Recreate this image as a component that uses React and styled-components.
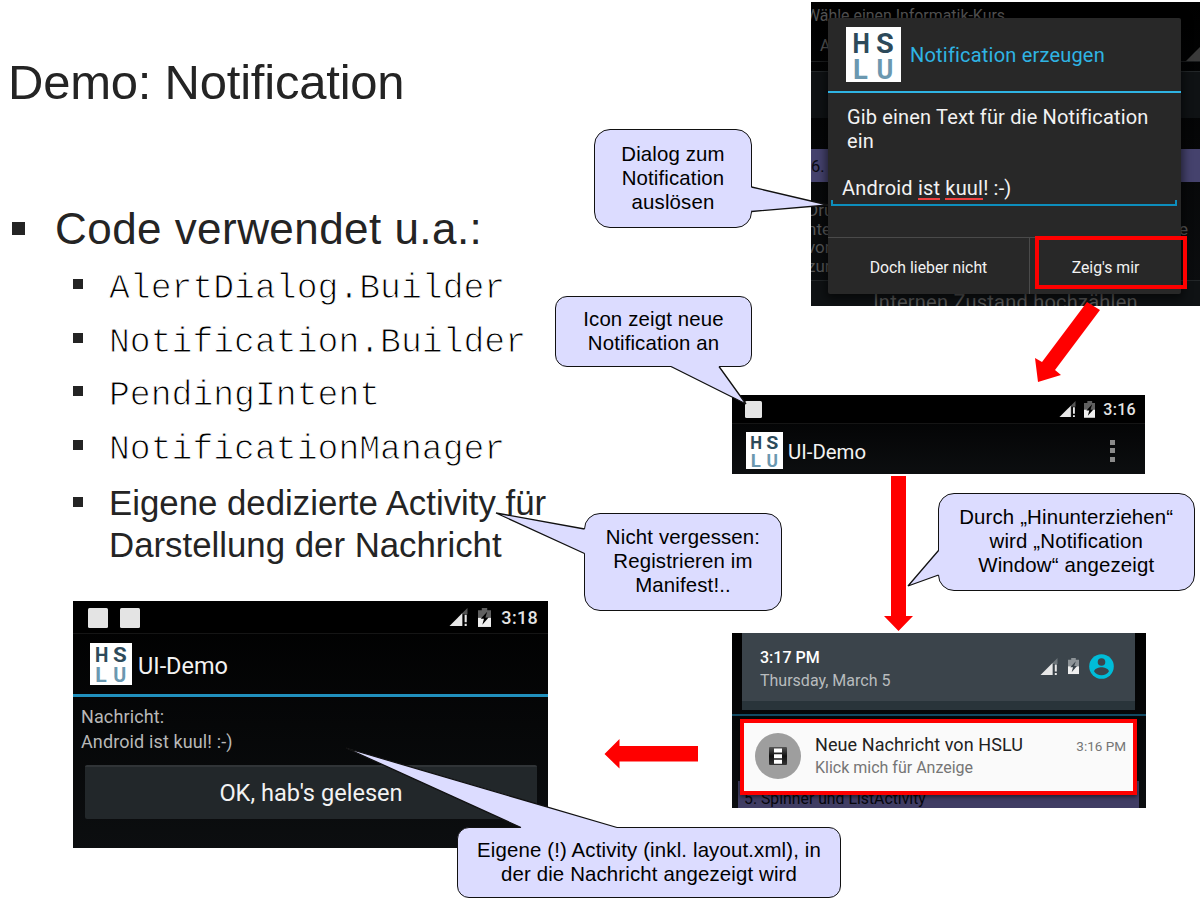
import React from "react";
import styled, { createGlobalStyle } from "styled-components";

const GlobalStyle = createGlobalStyle`
  * { box-sizing: border-box; }
  body { margin: 0; background: #fff; }
`;

const Slide = styled.main`
  position: relative;
  width: 1204px;
  height: 901px;
  overflow: hidden;
  background: #fff;
  color: #242424;
  font-family: "Liberation Sans", Arial, sans-serif;
`;

/* ---------- slide text ---------- */

const Outline = styled.section`
  display: flex;
  flex-direction: column;
  width: 570px;
  padding: 54px 0 0 8px;
`;

const Title = styled.h1`
  margin: 0 0 91px;
  font-size: 49px;
  font-weight: 400;
  letter-spacing: -0.22px;
  line-height: 56px;
  white-space: nowrap;
`;

const Topic = styled.h2`
  display: flex;
  align-items: center;
  gap: 30px;
  margin: 0 0 11px;
  padding-left: 4px;
  font-size: 44px;
  font-weight: 400;
  letter-spacing: 0.45px;
  line-height: 56px;
  white-space: nowrap;
  &::before {
    content: "";
    width: 13px;
    height: 13px;
    margin-top: -2px;
    background: #242424;
  }
`;

const Points = styled.ul`
  margin: 0;
  padding: 0 0 0 65px;
  list-style: none;
`;

const Point = styled.li`
  display: flex;
  gap: 26px;
  height: 53.6px;
  color: ${(p) => (p.$code ? "#000" : "inherit")};
  font-family: ${(p) => (p.$code ? '"Liberation Mono", monospace' : "inherit")};
  font-size: ${(p) => (p.$code ? "34.75px" : "34.8px")};
  -webkit-text-stroke: ${(p) => (p.$code ? "1px #fff" : "0")};
  line-height: 42px;
  white-space: nowrap;
  &::before {
    content: "";
    flex: none;
    width: 10px;
    height: 10px;
    margin-top: ${(p) => (p.$code ? 11 : 15)}px;
    background: #242424;
  }
`;

/* ---------- callouts and arrows ---------- */

const Bubble = styled.div`
  position: absolute;
  left: ${(p) => p.$x}px;
  top: ${(p) => p.$y}px;
  width: ${(p) => p.$w}px;
  height: ${(p) => p.$h}px;
  display: flex;
  align-items: center;
  justify-content: center;
  padding-bottom: 1px;
  border: 1.4px solid #111;
  border-radius: ${(p) => p.$r}px;
  background: #dcdcff;
  color: #000;
  font-size: 20.4px;
  letter-spacing: 0.15px;
  line-height: 24px;
  text-align: center;
  white-space: pre;
`;

const Overlay = styled.svg`
  position: absolute;
  inset: 0;
  pointer-events: none;
`;

function Callout({ x, y, w, h, r, tail, cover, children }) {
  return (
    <>
      <Bubble $x={x} $y={y} $w={w} $h={h} $r={r}>{children}</Bubble>
      <Overlay width="1204" height="901">
        <polygon points={cover} fill="#dcdcff" />
        <polyline points={tail} fill="#dcdcff" stroke="#111" strokeWidth="1.3" strokeLinejoin="bevel" />
      </Overlay>
    </>
  );
}

/* ---------- phone screens ---------- */

const Screen = styled.section`
  position: absolute;
  left: ${(p) => p.$x}px;
  top: ${(p) => p.$y}px;
  width: ${(p) => p.$w}px;
  height: ${(p) => p.$h}px;
  overflow: hidden;
  background: linear-gradient(#000, #0c0e10);
  color: #f2f2f2;
  font-family: Roboto, sans-serif;
  white-space: nowrap;
`;

const StatusBar = styled.div`
  display: flex;
  align-items: center;
  height: ${(p) => p.$h}px;
  padding: 1px ${(p) => p.$right}px 0 ${(p) => p.$left}px;
  border-bottom: 1px solid #151515;
  background: #000;
`;

const NoticeSquare = styled.span`
  width: ${(p) => p.$s}px;
  height: ${(p) => p.$s}px;
  margin-right: 12px;
  border-radius: 1.5px;
  background: #e4e4e4;
`;

const StatusIcons = styled.div`
  display: flex;
  align-items: center;
  gap: ${(p) => p.$gap}px;
  margin-left: auto;
`;

const Clock = styled.span`
  font-size: ${(p) => p.$size}px;
  font-weight: 500;
  letter-spacing: 0.3px;
  color: #e4e4e4;
`;

const AppBar = styled.div`
  display: flex;
  align-items: center;
  gap: ${(p) => p.$gap}px;
  height: ${(p) => p.$h}px;
  padding: 0 ${(p) => p.$right || 0}px 0 ${(p) => p.$left}px;
  border-bottom: ${(p) => (p.$rule ? "3px solid #2090bd" : "0")};
  font-size: ${(p) => p.$size}px;
`;

const AppName = styled.span`
  padding-top: 3px;
`;

const MenuDots = styled.span`
  display: flex;
  flex-direction: column;
  gap: 3.5px;
  margin-left: auto;
  i { width: 5px; height: 5px; background: #8a8a8a; }
`;

const LogoSvg = styled.svg`
  flex: none;
  font-family: Roboto, sans-serif;
  font-size: 27.5px;
  font-weight: 700;
`;

function HsluLogo({ size }) {
  return (
    <LogoSvg width={size} height={size} viewBox="0 0 55 55">
      <rect width="55" height="55" fill="#fff" />
      <text x="6.5" y="25.5" fill="#2d4a5a" textLength="17.5" lengthAdjust="spacingAndGlyphs">H</text>
      <text x="30" y="25.5" fill="#2d4a5a" textLength="18" lengthAdjust="spacingAndGlyphs">S</text>
      <text x="7" y="51.5" fill="#6b98b0" textLength="15" lengthAdjust="spacingAndGlyphs">L</text>
      <text x="30.5" y="51.5" fill="#6b98b0" textLength="17" lengthAdjust="spacingAndGlyphs">U</text>
    </LogoSvg>
  );
}

function SignalIcon({ size, dim = "#555", back = "#000" }) {
  return (
    <svg width={size} height={size} viewBox="0 0 18 18">
      <path d="M17.500 0 12 5.500V17h5.500Z" fill={dim} />
      <path d="M0.500 17 12.500 5V17Z" fill="#e8e8e8" />
      <path d="M13 6h5v12h-5z" fill={back} />
      <path d="M14.800 6.500h2v7h-2zM14.800 15h2v2h-2z" fill="#e8e8e8" />
    </svg>
  );
}

function BatteryIcon({ width, bolt = "#000", dim = "#606060" }) {
  return (
    <svg width={width} height={width * 1.5} viewBox="0 0 12 18">
      <path d="M3.500 0h5v2H12v7H0V2h3.500z" fill={dim} />
      <path d="M0 9h12v8.500H0z" fill="#efefef" />
      <path d="M8.500 3.500 2.500 10h3L4 15.500 9.800 8.800H6.800z" fill={bolt} />
    </svg>
  );
}

/* dialog screen */

const Backdrop = styled.div`
  display: flex;
  flex-direction: column;
  height: 100%;
  color: #555;
  font-size: 15.9px;
`;

const BackLine = styled.div`
  height: ${(p) => p.$h}px;
  padding-left: ${(p) => p.$left || 0}px;
  line-height: ${(p) => p.$h}px;
  text-indent: ${(p) => p.$shift || 0}px;
`;

const BackSpinner = styled(BackLine)`
  display: flex;
  justify-content: space-between;
  border-bottom: 1px solid #1b1d1e;
  &::after {
    content: "";
    align-self: flex-end;
    border-left: 14px solid transparent;
    border-bottom: 14px solid #3a3a3a;
  }
`;

const BackButton = styled.div`
  flex: none;
  height: ${(p) => p.$h}px;
  margin: ${(p) => p.$m};
  border-top: 1px solid #222628;
  background: #0f1214;
  color: #5a5a5a;
  font-size: 20px;
  letter-spacing: 0.24px;
  line-height: 43px;
  text-align: center;
`;

const BackSection = styled.div`
  height: 33px;
  margin-bottom: 19px;
  background: #45426d;
  color: #0a0a12;
  font-size: 16.5px;
  line-height: 35px;
`;

const BackText = styled.div`
  display: flex;
  justify-content: space-between;
  padding-right: 12px;
  height: 18.6px;
  font-size: 17px;
  line-height: 19px;
  text-indent: -4px;
`;

const Dialog = styled.div`
  position: absolute;
  left: 17px;
  top: 16px;
  width: 353px;
  height: 276px;
  display: flex;
  flex-direction: column;
  border-radius: 2px;
  background: #282828;
  box-shadow: 0 3px 10px 2px rgba(0, 0, 0, 0.55);
`;

const DialogTitle = styled.div`
  display: flex;
  align-items: center;
  gap: 9px;
  height: 75px;
  padding: 0 0 1px 18px;
  border-bottom: 2.5px solid #2fb4e4;
  color: #2fb4e4;
  font-size: 20px;
  letter-spacing: 0.2px;
  span { padding-top: 2px; }
`;

const DialogMessage = styled.p`
  margin: 12px 0 0;
  padding-left: 19px;
  font-size: 20px;
  letter-spacing: 0.16px;
  line-height: 24px;
`;

const DialogInput = styled.div`
  height: 29px;
  margin: 24px 4px 0 3px;
  padding-left: 11px;
  font-size: 20px;
  letter-spacing: 0.18px;
  line-height: 23px;
  border-bottom: 2px solid #0d8ebd;
  background:
    linear-gradient(#0d8ebd, #0d8ebd) left bottom / 2px 4px no-repeat,
    linear-gradient(#0d8ebd, #0d8ebd) right bottom / 2px 4px no-repeat;
`;

const Misspelled = styled.span`
  background: linear-gradient(#f04040, #f04040) left bottom / 100% 2px no-repeat;
`;

const DialogActions = styled.div`
  display: flex;
  flex: 1;
  margin-top: 31px;
  border-top: 1px solid #4a4a4a;
`;

const DialogButton = styled.button`
  width: ${(p) => p.$w}px;
  padding: 3px 0 0;
  border: 0;
  border-right: ${(p) => (p.$divided ? "1px solid #4a4a4a" : "0")};
  background: none;
  color: #f2f2f2;
  font: 400 15.8px Roboto, sans-serif;
`;

const Highlight = styled.div`
  position: absolute;
  left: ${(p) => p.$x}px;
  top: ${(p) => p.$y}px;
  width: ${(p) => p.$w}px;
  height: ${(p) => p.$h}px;
  border: 4px solid #f00;
`;

/* notification shade screen */

const ShadeHeader = styled.div`
  display: flex;
  align-items: center;
  height: 77px;
  margin: 0 11px 0 10px;
  padding: 0 21px 1px 18px;
  border-bottom: 9px solid #29343a;
  background: #3b444b;
`;

const ShadeDate = styled.div`
  padding-top: 4px;
  color: #b8bcbe;
  font-size: 16px;
  line-height: 23px;
  b { display: block; color: #fff; font-weight: 500; }
`;

const ShadeRule = styled.div`
  height: 2px;
  margin-top: 4px;
  background: #124a63;
`;

const ShadeSection = styled.div`
  height: 27px;
  margin: 65px 7px 0 6px;
  padding-left: 6px;
  background: #403d64;
  color: #06060c;
  font-size: 15.8px;
  line-height: 36px;
`;

const Notice = styled.div`
  position: absolute;
  left: 8px;
  top: 86px;
  width: 397px;
  height: 76px;
  display: flex;
  padding: 10px 7px 0 11px;
  border: 4px solid #f00;
  background: #fafafa;
  box-shadow: 0 2px 4px rgba(0, 0, 0, 0.5);
`;

const NoticeAvatar = styled.div`
  display: flex;
  align-items: center;
  justify-content: center;
  width: 46px;
  height: 46px;
  margin-right: 14px;
  border-radius: 50%;
  background: #9e9e9e;
`;

const NoticeBody = styled.div`
  flex: 1;
  color: #757575;
  font-size: 16px;
  line-height: 23px;
  strong { display: block; color: #212121; font-size: 18px; font-weight: 400; letter-spacing: 0.08px; }
`;

const NoticeTime = styled.time`
  color: #757575;
  font-size: 13.5px;
  line-height: 27px;
`;

/* message screen */

const Message = styled.div`
  padding: 7px 0 0 8px;
  color: #b8b8b8;
  font-size: 18px;
  letter-spacing: 0.12px;
  line-height: 25px;
`;

const WideButton = styled.button`
  display: block;
  width: 452px;
  height: 54px;
  margin: 11px 0 0 12px;
  border: 0;
  border-top: 2px solid #303437;
  border-radius: 2px;
  background: #22272a;
  color: #f2f2f2;
  font: 400 23.6px Roboto, sans-serif;
`;

export default function App() {
  return (
    <Slide>
      <GlobalStyle />
      <Outline>
        <Title>Demo: Notification</Title>
        <Topic>Code verwendet u.a.:</Topic>
        <Points>
          <Point $code>AlertDialog.Builder</Point>
          <Point $code>Notification.Builder</Point>
          <Point $code>PendingIntent</Point>
          <Point $code>NotificationManager</Point>
          <Point>Eigene dedizierte Activity für<br />Darstellung der Nachricht</Point>
        </Points>
      </Outline>

      <Screen $x={811} $y={2} $w={389} $h={304}>
        <Backdrop>
          <BackLine $h={27} $shift={-5}>Wähle einen Informatik-Kurs</BackLine>
          <BackSpinner $h={33} $left={9}>A</BackSpinner>
          <BackButton $h={47} $m="9px 0 31px" />
          <BackSection>6.</BackSection>
          <BackText><span>Drü</span></BackText>
          <BackText><span>nte</span><span>e</span></BackText>
          <BackText><span>von</span></BackText>
          <BackText><span>zur</span></BackText>
          <BackButton $h={30} $m="5px 0 0">Internen Zustand hochzählen</BackButton>
        </Backdrop>
        <Dialog>
          <DialogTitle><HsluLogo size={55} /><span>Notification erzeugen</span></DialogTitle>
          <DialogMessage>Gib einen Text für die Notification<br />ein</DialogMessage>
          <DialogInput>
            Android <Misspelled>ist</Misspelled> <Misspelled>kuul</Misspelled>! :-)
          </DialogInput>
          <DialogActions>
            <DialogButton $w={202} $divided>Doch lieber nicht</DialogButton>
            <DialogButton $w={151}>Zeig's mir</DialogButton>
          </DialogActions>
        </Dialog>
        <Highlight $x={224} $y={234} $w={152} $h={53} />
      </Screen>

      <Screen $x={732} $y={395} $w={413} $h={79}>
        <StatusBar $h={29} $left={13} $right={9}>
          <NoticeSquare $s={17} />
          <StatusIcons $gap={8}>
            <SignalIcon size={17} />
            <BatteryIcon width={11.5} />
            <Clock $size={16}>3:16</Clock>
          </StatusIcons>
        </StatusBar>
        <AppBar $h={53} $left={14} $right={30} $gap={5} $size={20.4}>
          <HsluLogo size={37} /><AppName>UI-Demo</AppName>
          <MenuDots><i /><i /><i /></MenuDots>
        </AppBar>
      </Screen>

      <Screen $x={732} $y={633} $w={414} $h={175}>
        <ShadeHeader>
          <ShadeDate><b>3:17 PM</b>Thursday, March 5</ShadeDate>
          <StatusIcons $gap={10}>
            <SignalIcon size={18} dim="#6d757a" back="#3b444b" />
            <BatteryIcon width={11} bolt="#3b444b" dim="#8d9397" />
            <svg width="25" height="25" viewBox="0 0 25 25">
              <circle cx="12.5" cy="12.5" r="12.3" fill="#00bcd8" />
              <circle cx="12.5" cy="8" r="3.8" fill="#3b444b" />
              <path d="M5 17.300c1-3 5-4 7.500-4s6.500 1 7.500 4c-1.500 2.500-4.500 4-7.500 4s-6-1.500-7.500-4Z" fill="#3b444b" />
            </svg>
          </StatusIcons>
        </ShadeHeader>
        <ShadeRule />
        <ShadeSection>5. Spinner und ListActivity</ShadeSection>
        <Notice>
          <NoticeAvatar>
            <svg width="18" height="18" viewBox="0 0 18 18">
              <defs>
                <linearGradient id="film" x1="0" y1="0" x2="0" y2="1">
                  <stop offset="0" stopColor="#555" />
                  <stop offset="0.5" stopColor="#111" />
                  <stop offset="1" stopColor="#333" />
                </linearGradient>
              </defs>
              <rect width="18" height="18" rx="1" fill="url(#film)" />
              <path d="M5 1.500h8v4H5zM5 7.200h8v4H5zM5 12.800h8v4H5z" fill="#fff" />
            </svg>
          </NoticeAvatar>
          <NoticeBody><strong>Neue Nachricht von HSLU</strong>Klick mich für Anzeige</NoticeBody>
          <NoticeTime>3:16 PM</NoticeTime>
        </Notice>
      </Screen>

      <Screen $x={73} $y={601} $w={475} $h={247}>
        <StatusBar $h={33} $left={15} $right={10}>
          <NoticeSquare $s={20} />
          <NoticeSquare $s={20} />
          <StatusIcons $gap={10}>
            <SignalIcon size={19} />
            <BatteryIcon width={13} />
            <Clock $size={18}>3:18</Clock>
          </StatusIcons>
        </StatusBar>
        <AppBar $h={63} $left={17} $gap={6} $size={23.500} $rule>
          <HsluLogo size={42} /><AppName>UI-Demo</AppName>
        </AppBar>
        <Message>Nachricht:<br />Android ist kuul! :-)</Message>
        <WideButton>OK, hab's gelesen</WideButton>
      </Screen>

      <Overlay width="1204" height="901" fill="#f00">
        <polygon points="1087,302 1100,310 1055,370 1061,375 1038,382 1035,358 1042,362" />
        <polygon points="891,476 906,476 906,616 913,616 898.5,631 884,616 891,616" />
        <polygon points="698,746 698,761.5 619.5,761.5 619.5,768.5 604.5,754 619.5,739 619.5,746" />
      </Overlay>

      <Callout x={594} y={129} w={158} h={98.5} r={16}
        cover="748,187 753,187.5 753,210.5 748,211" tail="751.5,187 828,205 751.5,211.5">
        {"Dialog zum\nNotification\nauslösen"}
      </Callout>
      <Callout x={555} y={296} w={197} h={71} r={12}
        cover="671,363 671,367.5 719,367.5 719,363" tail="671,366.5 746,404 719,366.5">
        {"Icon zeigt neue\nNotification an"}
      </Callout>
      <Callout x={584} y={512.5} w={198} h={98.5} r={16}
        cover="584,529 589,529 589,554 584,553" tail="584.5,529 496,513 584.5,553.5">
        {"Nicht vergessen:\nRegistrieren im\nManifest!.."}
      </Callout>
      <Callout x={938} y={492.5} w={256.5} h={98.5} r={16}
        cover="938,551 943,551 943,575 938,575" tail="938.5,550.5 908,586 938.5,575">
        {"Durch „Hinunterziehen“\nwird „Notification\nWindow“ angezeigt"}
      </Callout>
      <Callout x={457} y={827} w={384} h={71} r={12}
        cover="521,832 521,827 617,827 617,832" tail="521,827.5 346,748 617,827.5">
        {"Eigene (!) Activity (inkl. layout.xml), in\nder die Nachricht angezeigt wird"}
      </Callout>
    </Slide>
  );
}
